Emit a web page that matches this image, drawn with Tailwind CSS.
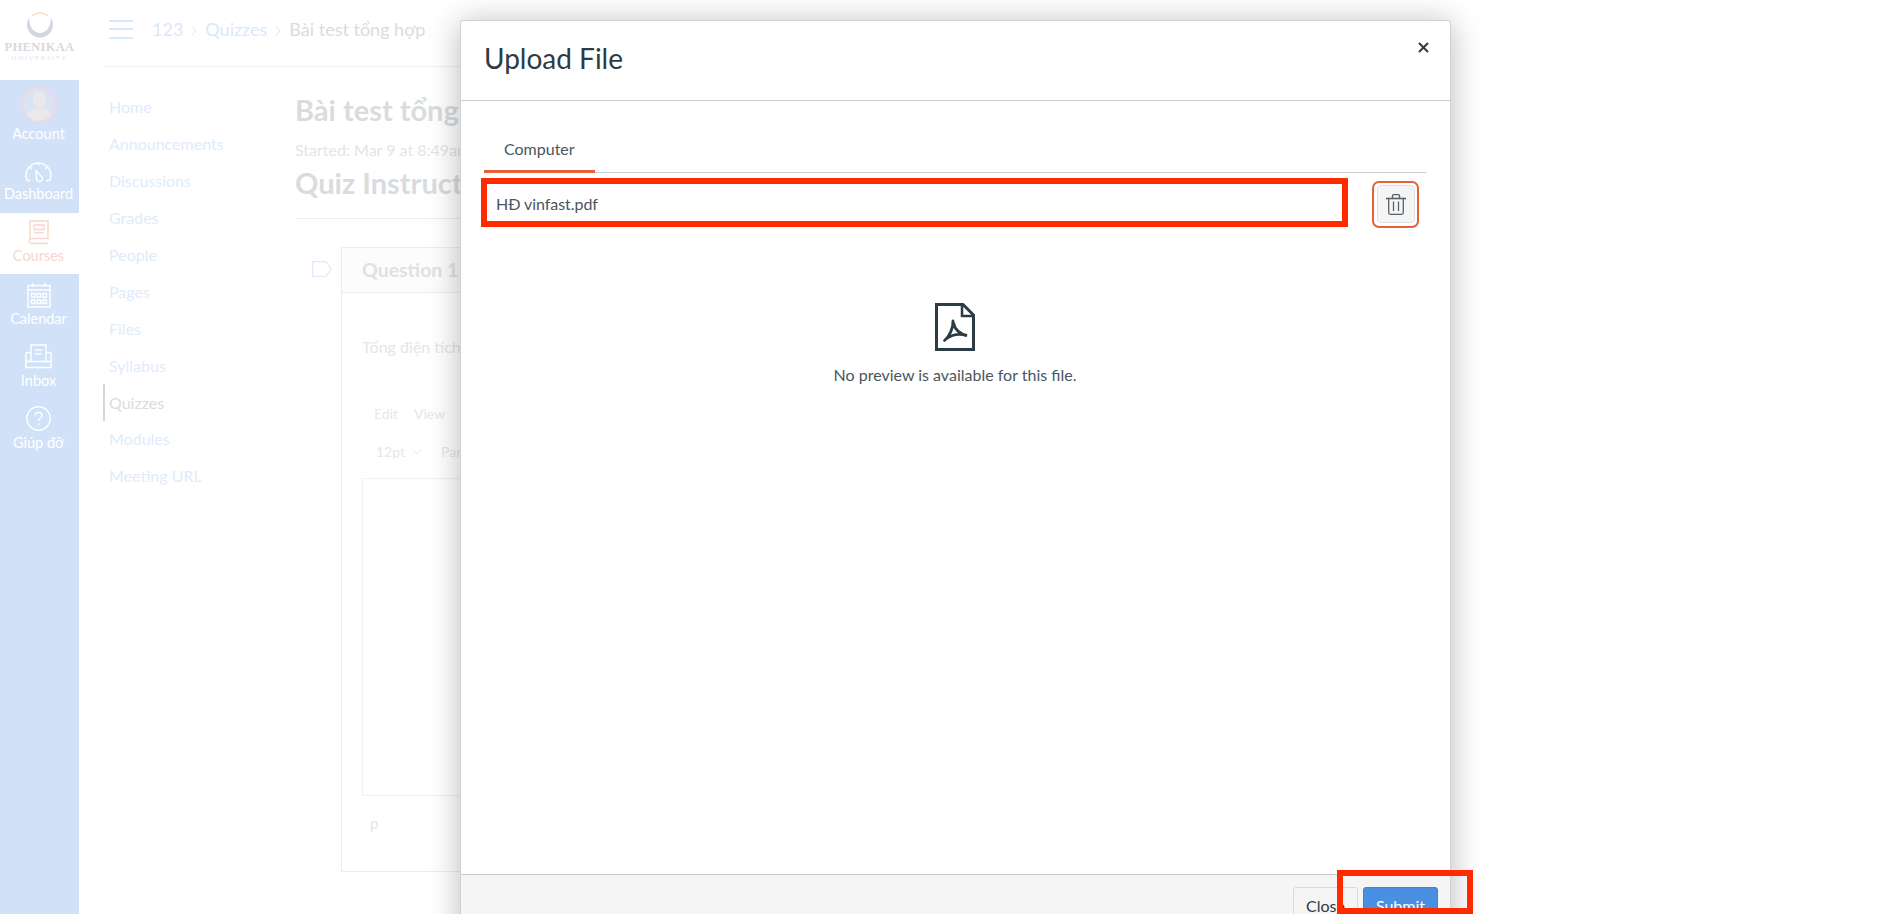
<!DOCTYPE html>
<html lang="vi">
<head>
<meta charset="UTF-8">
<title>Upload File</title>
<script src="https://cdn.jsdelivr.net/npm/@tailwindcss/browser@4"></script>
</head>
<body class="font-[family-name:Lato,sans-serif]">
<div class="relative h-[914px] w-[1882px] overflow-hidden bg-white flex">

  <!-- global nav -->
  <aside class="w-[79px] shrink-0 h-full bg-[#d1e2f8] flex flex-col text-white text-[14.5px] leading-[18px]">
    <div class="h-[80px] bg-white flex flex-col items-center pt-[11px]">
      <svg class="w-[28px] h-[27px]" viewBox="0 0 28 27" fill="none">
        <path d="M6 5 A12 12 0 0 1 22 5" stroke="#fbdcc9" stroke-width="1.6"/>
        <path d="M3.5 6 A13 13 0 1 0 24.5 6 C26 15 20 22 14 22 C8 22 2 15 3.5 6 Z" fill="#d3d7e4"/>
      </svg>
      <div class="font-[family-name:'Liberation_Serif',serif] font-bold text-[12.5px] leading-[13px] tracking-[0.3px] text-[#d6d9e3] mt-[3px]">PHENIKAA</div>
      <div class="text-[6.5px] leading-[8px] tracking-[1.9px] text-[#e3e4ec]">UNIVERSITY</div>
    </div>

    <a class="h-[72px] flex flex-col items-center pt-[7px] pr-[2px] text-white">
      <div class="relative w-[36px] h-[36px] rounded-full border-[2px] border-[#f0d5e6] bg-[#d9e4f3] overflow-hidden">
        <div class="absolute left-[10px] top-[2px] w-[13px] h-[17px] rounded-full bg-[#e9e9ea]"></div>
        <div class="absolute left-[3px] top-[20px] w-[27px] h-[16px] rounded-t-[10px] bg-[#e9e9ea]"></div>
      </div>
      <span class="mt-[2px]">Account</span>
    </a>

    <a class="h-[61px] flex flex-col items-center pt-[10px] pr-[2px] text-white">
      <svg class="w-[27px] h-[20px]" viewBox="0 0 27 20" fill="none" stroke="#fff" stroke-width="1.4">
        <path d="M5 18.5 H2.4 C1.5 16.8 1 15 1 13.5 A12.5 12.5 0 0 1 26 13.5 C26 15 25.5 16.8 24.6 18.5 H21"/>
        <path d="M11 9 L16.5 14.5 A3 3 0 1 1 11.5 16 Z"/>
        <path d="M13.5 1 V3.5 M5 5 L6.8 6.8 M22 5 L20.2 6.8"/>
      </svg>
      <span class="mt-[3px]">Dashboard</span>
    </a>

    <a class="h-[61px] bg-white flex flex-col items-center pt-[7px] pr-[2px] text-[#fad5cb]">
      <svg class="w-[21px] h-[25px]" viewBox="0 0 21 25" fill="none" stroke="#fad5cb" stroke-width="1.4">
        <path d="M2 20 V1 H20 V18.5 H3.5 A2.5 2.5 0 0 0 3.5 23.5 H20"/>
        <path d="M6 5 H16 V9.5 H6 Z M6 12.5 H16"/>
      </svg>
      <span class="mt-[2px]">Courses</span>
    </a>

    <a class="h-[62px] flex flex-col items-center pt-[8px] pr-[2px] text-white">
      <svg class="w-[24px] h-[26px]" viewBox="0 0 24 26" fill="none" stroke="#fff" stroke-width="1.4">
        <path d="M1 3.5 H23 V25 H1 Z M1 8 H23 M6 1 V5 M18 1 V5"/>
        <path d="M4.5 11.5 H8 V15 H4.5 Z M10.2 11.5 H13.8 V15 H10.2 Z M16 11.5 H19.5 V15 H16 Z M4.5 18 H8 V21.5 H4.5 Z M10.2 18 H13.8 V21.5 H10.2 Z M16 18 H19.5 V21.5 H16 Z"/>
      </svg>
      <span class="mt-[2px]">Calendar</span>
    </a>

    <a class="h-[62px] flex flex-col items-center pt-[8px] pr-[2px] text-white">
      <svg class="w-[27px] h-[25px]" viewBox="0 0 27 25" fill="none" stroke="#fff" stroke-width="1.4">
        <path d="M6 14 V1 H21 V14 M10 6 H17 M10 10 H17"/>
        <path d="M6 8.5 H2 C1 8.5 1 9.5 1 10 V23.5 H26 V10 C26 9.5 26 8.5 25 8.5 H21 M1 17.5 H26 M6 14 V17.5 M21 14 V17.5"/>
      </svg>
      <span class="mt-[3px]">Inbox</span>
    </a>

    <a class="h-[62px] flex flex-col items-center pt-[8px] pr-[2px] text-white">
      <svg class="w-[25px] h-[25px]" viewBox="0 0 25 25" fill="none" stroke="#fff" stroke-width="1.4">
        <circle cx="12.5" cy="12.5" r="11.7"/>
        <path d="M9 9.5 C9 5.5 16 5.5 16 9.5 C16 12 12.5 12 12.5 15"/>
        <path d="M12.5 17.5 V19"/>
      </svg>
      <span class="mt-[3px]">Giúp đỡ</span>
    </a>
  </aside>

  <!-- page behind the dialog -->
  <div class="flex-1 flex flex-col pl-[24px]">
    <header class="h-[67px] w-[400px] shrink-0 border-b border-[#f0f1f2] flex items-center pb-[8px]">
      <div class="ml-[6px] w-[24px] flex flex-col gap-[6.5px]">
        <span class="h-[2px] bg-[#d9e7fa]"></span>
        <span class="h-[2px] bg-[#d9e7fa]"></span>
        <span class="h-[2px] bg-[#d9e7fa]"></span>
      </div>
      <nav class="ml-[19px] flex items-center text-[18px] text-[#dae8fb] whitespace-nowrap">
        <span>123</span>
        <svg class="mx-[8px] mt-[3px] w-[6px] h-[10px]" viewBox="0 0 6 10" fill="none" stroke="#dfe2e4"><path d="M.5.5 L5 5 L.5 9.5"/></svg>
        <span>Quizzes</span>
        <svg class="mx-[8px] mt-[3px] w-[6px] h-[10px]" viewBox="0 0 6 10" fill="none" stroke="#dfe2e4"><path d="M.5.5 L5 5 L.5 9.5"/></svg>
        <span class="text-[#d9dcde]">Bài test tổng hợp</span>
      </nav>
    </header>

    <div class="flex">
      <ul class="w-[192px] shrink-0 pt-[22px] text-[16px] text-[#e0ebfb]">
        <li class="h-[36.9px] flex items-center pl-[6px]">Home</li>
        <li class="h-[36.9px] flex items-center pl-[6px]">Announcements</li>
        <li class="h-[36.9px] flex items-center pl-[6px]">Discussions</li>
        <li class="h-[36.9px] flex items-center pl-[6px]">Grades</li>
        <li class="h-[36.9px] flex items-center pl-[6px]">People</li>
        <li class="h-[36.9px] flex items-center pl-[6px]">Pages</li>
        <li class="h-[36.9px] flex items-center pl-[6px]">Files</li>
        <li class="h-[36.9px] flex items-center pl-[6px]">Syllabus</li>
        <li class="h-[36.9px] flex items-center pl-[4px] border-l-2 border-[#d5d8da] text-[#d9dcde]">Quizzes</li>
        <li class="h-[36.9px] flex items-center pl-[6px]">Modules</li>
        <li class="h-[36.9px] flex items-center pl-[6px]">Meeting URL</li>
      </ul>

      <main class="flex-1 pt-[25px]">
        <h1 class="text-[29px] leading-[36px] font-bold text-[#d9dcde] whitespace-nowrap">Bài test tổng hợp</h1>
        <p class="mt-[12px] text-[16px] leading-[20px] text-[#e3e5e6]">Started: Mar 9 at 8:49am</p>
        <h2 class="mt-[5px] text-[29px] leading-[36px] font-bold text-[#d9dcde] w-[880px] pb-[17px] border-b border-[#eceded]">Quiz Instructions</h2>

        <div class="flex mt-[28px]">
          <svg class="w-[20px] h-[16px] mt-[14px] ml-[17px] mr-[9px]" viewBox="0 0 20 16" fill="none" stroke="#dde9fb" stroke-width="1.2">
            <path d="M.6.6 H14 L19.4 8 L14 15.4 H.6 Z"/>
          </svg>
          <section class="w-[700px] h-[625px] border border-[#eceded]">
            <div class="h-[45px] border-b border-[#eceded] bg-[#fcfcfc] flex items-center pl-[20px] text-[19.5px] font-bold text-[#dfe1e3]">Question 1</div>
            <p class="mt-[44px] pl-[20px] text-[16px] leading-[20px] text-[#e4e6e7]">Tổng điện tích</p>
            <div class="mt-[48px] pl-[32px] flex gap-[16px] text-[14px] leading-[18px] text-[#e6e7e8]">
              <span>Edit</span><span>View</span>
            </div>
            <div class="mt-[20px] pl-[34px] flex items-center text-[14px] leading-[18px] text-[#e6e7e8]">
              <span>12pt</span>
              <svg class="w-[10px] h-[6px] ml-[7px]" viewBox="0 0 10 6" fill="none" stroke="#e3e5e6"><path d="M.5.5 L5 5 L9.5.5"/></svg>
              <span class="ml-[19px]">Paragraph</span>
            </div>
            <div class="mt-[17px] ml-[20px] h-[318px] border border-[#f1f1f1] rounded-[2px]"></div>
            <p class="mt-[18px] pl-[28px] text-[15px] leading-[18px] text-[#e4e6e7]">p</p>
          </section>
        </div>
      </main>
    </div>
  </div>

  <!-- dialog -->
  <div class="absolute left-[460px] top-[20px] w-[991px] h-[921px] flex flex-col bg-white border border-[#d0d3d6] rounded-[3px] shadow-[0_3px_32px_rgba(0,0,0,0.28)] text-[#2d3b45]">
    <div class="relative h-[80px] shrink-0 border-b border-[#c7cdd1] flex items-center pl-[23px] pb-[5px]">
      <h2 class="text-[28px] leading-[32px]">Upload File</h2>
      <svg class="absolute right-[21px] top-[21px] w-[11px] h-[11px]" viewBox="0 0 11 11" stroke="#2d3b45" stroke-width="2"><path d="M1 1 L10 10 M10 1 L1 10"/></svg>
    </div>

    <div class="flex-1 flex flex-col pl-[23px] pr-[24px]">
      <div class="mt-[22px] border-b border-[#c7cdd1] flex">
        <div class="h-[50px] w-[111px] -mb-px border-b-[3px] border-[#e66135] pl-[20px] pt-[16px] text-[16px] leading-[20px] text-[#4a5660]">Computer</div>
      </div>

      <div class="mt-[7px] flex items-center h-[48px]">
        <span class="pl-[12px] text-[16px] tracking-[-0.05px] text-[#4a5660]">HĐ vinfast.pdf</span>
        <button class="ml-auto mr-[7px] w-[47px] h-[47px] rounded-[7px] border-2 border-[#e66135] flex items-center justify-center">
          <span class="w-[38px] h-[38px] rounded-[4px] bg-[#f5f5f5] border border-[#dfe1e2] flex items-center justify-center">
            <svg class="w-[20px] h-[21px]" viewBox="0 0 20 21" fill="none" stroke="#56626c" stroke-width="1.3">
              <path d="M0 4.5 H20" stroke-width="1.6"/>
              <path d="M6.5 4 V1.7 C6.5 1 7 .7 7.5 .7 H12.5 C13 .7 13.5 1 13.5 1.7 V4"/>
              <path d="M2.7 4.5 V18.5 C2.7 19.6 3.4 20.3 4.5 20.3 H15.5 C16.6 20.3 17.3 19.6 17.3 18.5 V4.5"/>
              <path d="M7.5 7.5 V17 M12.5 7.5 V17"/>
            </svg>
          </span>
        </button>
      </div>

      <div class="mt-[75px] flex flex-col items-center">
        <svg class="w-[40px] h-[48px]" viewBox="0 0 40 48" fill="none" stroke="#2d3b45">
          <path d="M1.5 1.5 H28 L38.5 12 V46.5 H1.5 Z" stroke-width="3"/>
          <path d="M27 2 V13 H38" stroke-width="2.5"/>
          <path d="M18 18 C18.5 25 14 34 9.5 37.5 M18.5 20 C19.5 26 25 31.5 32 32.5 C25 30.5 17 31.5 11 36" stroke-width="2.8" stroke-linecap="round"/>
        </svg>
        <p class="mt-[14px] text-[16px] leading-[20px] text-[#4a5660]">No preview is available for this file.</p>
      </div>
    </div>

    <div class="h-[66px] shrink-0 border-t border-[#c7cdd1] bg-[#f5f5f5] flex justify-end gap-[5px] pt-[12px] pr-[12px]">
      <button class="w-[65px] h-[38px] rounded-[3px] border border-[#d8dadc] bg-[#f5f5f5] text-[16px] text-[#2d3b45]">Close</button>
      <button class="w-[75px] h-[38px] rounded-[3px] border border-[#3f82d0] bg-[#4a90e2] text-[16px] text-white">Submit</button>
    </div>
  </div>

  <!-- red annotation boxes -->
  <div class="absolute left-[481px] top-[178px] w-[867px] h-[49px] border-[6px] border-[#ff2a00]"></div>
  <div class="absolute left-[1337px] top-[870px] w-[136px] h-[44px] border-[6px] border-[#ff2a00]"></div>
</div>
</body>
</html>
